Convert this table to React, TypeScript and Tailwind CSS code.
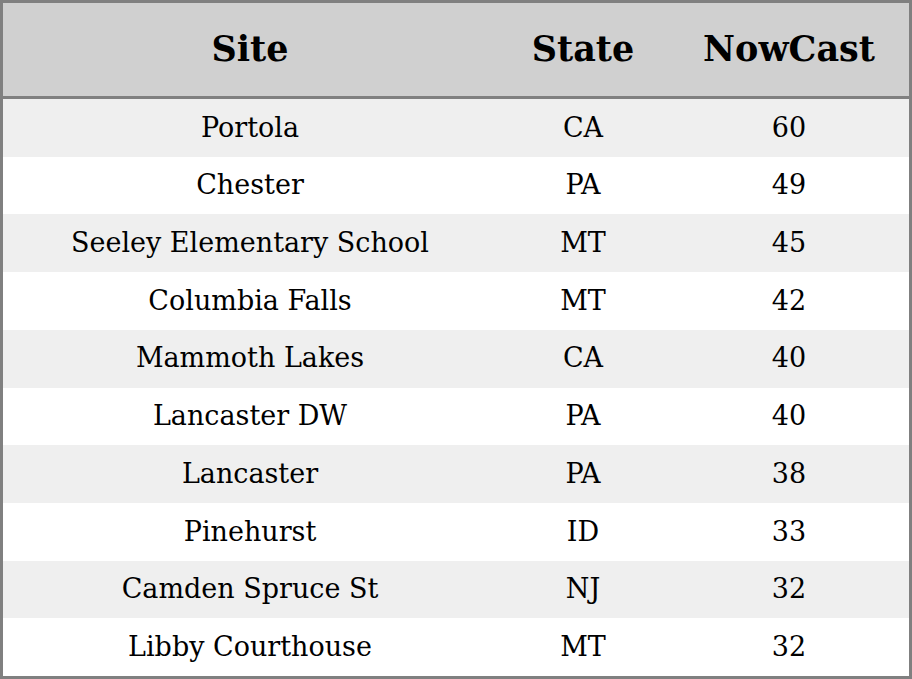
import React from 'react';

const rows = [
  { site: 'Portola', state: 'CA', nowcast: 60 },
  { site: 'Chester', state: 'PA', nowcast: 49 },
  { site: 'Seeley Elementary School', state: 'MT', nowcast: 45 },
  { site: 'Columbia Falls', state: 'MT', nowcast: 42 },
  { site: 'Mammoth Lakes', state: 'CA', nowcast: 40 },
  { site: 'Lancaster DW', state: 'PA', nowcast: 40 },
  { site: 'Lancaster', state: 'PA', nowcast: 38 },
  { site: 'Pinehurst', state: 'ID', nowcast: 33 },
  { site: 'Camden Spruce St', state: 'NJ', nowcast: 32 },
  { site: 'Libby Courthouse', state: 'MT', nowcast: 32 },
];

const cols = 'grid grid-cols-[494px_172px_1fr] items-center text-center';

export default function App() {
  return (
    <div className="w-[912px] h-[679px] bg-white font-['DejaVu_Serif',serif] text-black">
      <div className="h-full border-[3px] border-[#808080] flex flex-col">
        <div className={`${cols} h-[96px] shrink-0 bg-[#d0d0d0] border-b-[3px] border-[#808080] text-[35px] font-bold`}>
          <div>Site</div>
          <div>State</div>
          <div>NowCast</div>
        </div>
        <div className="flex-1 flex flex-col text-[27px]">
          {rows.map((r, i) => (
            <div key={i} className={`${cols} flex-1 ${i % 2 === 0 ? 'bg-[#efefef]' : 'bg-white'}`}>
              <div>{r.site}</div>
              <div>{r.state}</div>
              <div>{r.nowcast}</div>
            </div>
          ))}
        </div>
      </div>
    </div>
  );
}
